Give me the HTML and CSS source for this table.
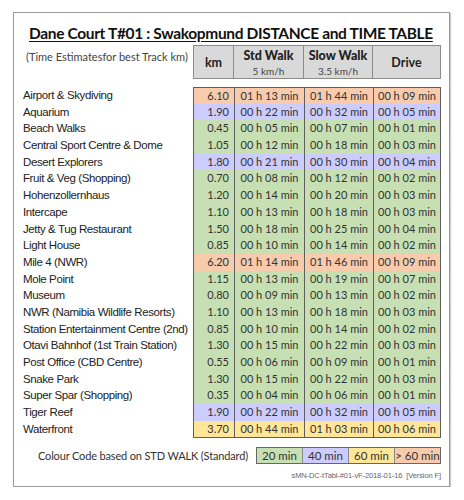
FILE: index.html
```html
<!DOCTYPE html>
<html lang="en">
<head>
    <meta charset="UTF-8">
    <title>Dane Court T#01 : Swakopmund Distance and Time Table</title>
    <link rel="stylesheet" href="styles.css">
</head>
<body>
    <div class="sheet">
        <h1 class="title">Dane Court T#01 : Swakopmund DISTANCE and TIME TABLE</h1>

        <div class="head">
            <div class="note">(Time Estimatesfor best Track km)</div>
            <div class="hcell">km</div>
            <div class="hcell"><b>Std Walk</b><span>5 km/h</span></div>
            <div class="hcell"><b>Slow Walk</b><span>3.5 km/h</span></div>
            <div class="hcell">Drive</div>
        </div>

        <div class="rows">
            <div class="row orange"><div class="name">Airport &amp; Skydiving</div><div class="km">6.10</div><div class="t">01 h 13 min</div><div class="t">01 h 44 min</div><div class="t">00 h 09 min</div></div>
            <div class="row blue"><div class="name">Aquarium</div><div class="km">1.90</div><div class="t">00 h 22 min</div><div class="t">00 h 32 min</div><div class="t">00 h 05 min</div></div>
            <div class="row green"><div class="name">Beach Walks</div><div class="km">0.45</div><div class="t">00 h 05 min</div><div class="t">00 h 07 min</div><div class="t">00 h 01 min</div></div>
            <div class="row green"><div class="name">Central Sport Centre &amp; Dome</div><div class="km">1.05</div><div class="t">00 h 12 min</div><div class="t">00 h 18 min</div><div class="t">00 h 03 min</div></div>
            <div class="row blue"><div class="name">Desert Explorers</div><div class="km">1.80</div><div class="t">00 h 21 min</div><div class="t">00 h 30 min</div><div class="t">00 h 04 min</div></div>
            <div class="row green"><div class="name">Fruit &amp; Veg (Shopping)</div><div class="km">0.70</div><div class="t">00 h 08 min</div><div class="t">00 h 12 min</div><div class="t">00 h 02 min</div></div>
            <div class="row green"><div class="name">Hohenzollernhaus</div><div class="km">1.20</div><div class="t">00 h 14 min</div><div class="t">00 h 20 min</div><div class="t">00 h 03 min</div></div>
            <div class="row green"><div class="name">Intercape</div><div class="km">1.10</div><div class="t">00 h 13 min</div><div class="t">00 h 18 min</div><div class="t">00 h 03 min</div></div>
            <div class="row green"><div class="name">Jetty &amp; Tug Restaurant</div><div class="km">1.50</div><div class="t">00 h 18 min</div><div class="t">00 h 25 min</div><div class="t">00 h 04 min</div></div>
            <div class="row green"><div class="name">Light House</div><div class="km">0.85</div><div class="t">00 h 10 min</div><div class="t">00 h 14 min</div><div class="t">00 h 02 min</div></div>
            <div class="row orange"><div class="name">Mile 4 (NWR)</div><div class="km">6.20</div><div class="t">01 h 14 min</div><div class="t">01 h 46 min</div><div class="t">00 h 09 min</div></div>
            <div class="row green"><div class="name">Mole Point</div><div class="km">1.15</div><div class="t">00 h 13 min</div><div class="t">00 h 19 min</div><div class="t">00 h 07 min</div></div>
            <div class="row green"><div class="name">Museum</div><div class="km">0.80</div><div class="t">00 h 09 min</div><div class="t">00 h 13 min</div><div class="t">00 h 02 min</div></div>
            <div class="row green"><div class="name">NWR (Namibia Wildlife Resorts)</div><div class="km">1.10</div><div class="t">00 h 13 min</div><div class="t">00 h 18 min</div><div class="t">00 h 03 min</div></div>
            <div class="row green"><div class="name">Station Entertainment Centre (2nd)</div><div class="km">0.85</div><div class="t">00 h 10 min</div><div class="t">00 h 14 min</div><div class="t">00 h 02 min</div></div>
            <div class="row green"><div class="name">Otavi Bahnhof (1st Train Station)</div><div class="km">1.30</div><div class="t">00 h 15 min</div><div class="t">00 h 22 min</div><div class="t">00 h 03 min</div></div>
            <div class="row green"><div class="name">Post Office (CBD Centre)</div><div class="km">0.55</div><div class="t">00 h 06 min</div><div class="t">00 h 09 min</div><div class="t">00 h 01 min</div></div>
            <div class="row green"><div class="name">Snake Park</div><div class="km">1.30</div><div class="t">00 h 15 min</div><div class="t">00 h 22 min</div><div class="t">00 h 03 min</div></div>
            <div class="row green"><div class="name">Super Spar (Shopping)</div><div class="km">0.35</div><div class="t">00 h 04 min</div><div class="t">00 h 06 min</div><div class="t">00 h 01 min</div></div>
            <div class="row blue"><div class="name">Tiger Reef</div><div class="km">1.90</div><div class="t">00 h 22 min</div><div class="t">00 h 32 min</div><div class="t">00 h 05 min</div></div>
            <div class="row yellow"><div class="name">Waterfront</div><div class="km">3.70</div><div class="t">00 h 44 min</div><div class="t">01 h 03 min</div><div class="t">00 h 06 min</div></div>
        </div>

        <div class="legend">
            <span class="legend-label">Colour Code based on STD WALK (Standard)</span>
            <div class="keys">
                <span class="key green">20 min</span>
                <span class="key blue">40 min</span>
                <span class="key yellow">60 min</span>
                <span class="key orange">&gt; 60 min</span>
            </div>
        </div>

        <div class="version">sMN-DC-tTabl-#01-vF-2018-01-16&nbsp; [Version F]</div>
    </div>
</body>
</html>
```

FILE: styles.css
```css
body {
    margin: 0;
    background: #fff;
    font-family: Lato, "Liberation Sans", sans-serif;
    color: #333;
}

.sheet {
    width: 427px;
    height: 473px;
    margin: 12px 0 0 13px;
    padding: 0 8px 0 0;
    border: 1px solid #9a9a9a;
    box-shadow: 1px 1px 1px #ccc;
}

.title {
    margin: 0;
    padding: 11px 0 0 15px;
    height: 32px;
    box-sizing: border-box;
    font-size: 15.5px;
    font-weight: bold;
    letter-spacing: -0.35px;
    color: #111;
    text-decoration: underline;
    text-underline-offset: 2px;
    white-space: nowrap;
}

.head, .row {
    display: grid;
    grid-template-columns: 179px 41px 70px 69px 68px;
}

.head {
    height: 34px;
}

.note {
    padding: 5px 0 0 12px;
    font-size: 11px;
    color: #444;
    white-space: nowrap;
}

.hcell {
    display: flex;
    flex-direction: column;
    align-items: center;
    justify-content: center;
    background: #d9d9d9;
    border: 1px solid #8c8c8c;
    border-left: none;
    font-size: 12.5px;
    font-weight: bold;
    color: #222;
}

.head .hcell:nth-child(2) {
    border-left: 1px solid #8c8c8c;
}

.hcell span {
    font-size: 10px;
    font-weight: normal;
    color: #444;
    margin-top: 2px;
}

.rows {
    margin-top: 8px;
}

.row {
    height: 16.7px;
    font-size: 11px;
}

.row > div {
    line-height: 16.7px;
    white-space: nowrap;
}

.name {
    padding-left: 9px;
    font-family: "Liberation Sans", Arial, sans-serif;
    font-size: 11.5px;
    letter-spacing: -0.4px;
    color: #222;
}

.km {
    text-align: right;
    padding-right: 5px;
    border-left: 1px solid #5e5e5e;
}

.t {
    text-align: center;
    border-left: 1px solid #5e5e5e;
}

.row .t:last-child {
    border-right: 1px solid #5e5e5e;
}

.row:first-child > div:not(.name) {
    border-top: 1px solid #5e5e5e;
}

.row:last-child > div:not(.name) {
    border-bottom: 1px solid #5e5e5e;
}

.green > div:not(.name), .key.green { background: #c6e0b4; }
.blue > div:not(.name), .key.blue { background: #ccccff; }
.yellow > div:not(.name), .key.yellow { background: #ffe699; }
.orange > div:not(.name), .key.orange { background: #f8cbad; }

.legend {
    display: flex;
    justify-content: flex-end;
    align-items: center;
    gap: 8px;
    margin-top: 10px;
}

.legend-label {
    font-size: 11px;
    letter-spacing: -0.15px;
    color: #333;
}

.keys {
    display: flex;
    border: 1px solid #666;
}

.key {
    width: 45px;
    height: 15px;
    line-height: 15px;
    text-align: center;
    font-size: 11.5px;
    border-left: 1px solid #888;
}

.key:first-child {
    border-left: none;
}

.version {
    margin-top: 7px;
    text-align: right;
    font-family: "Liberation Sans", Arial, sans-serif;
    font-size: 7.5px;
    color: #666;
    letter-spacing: -0.1px;
}
```
